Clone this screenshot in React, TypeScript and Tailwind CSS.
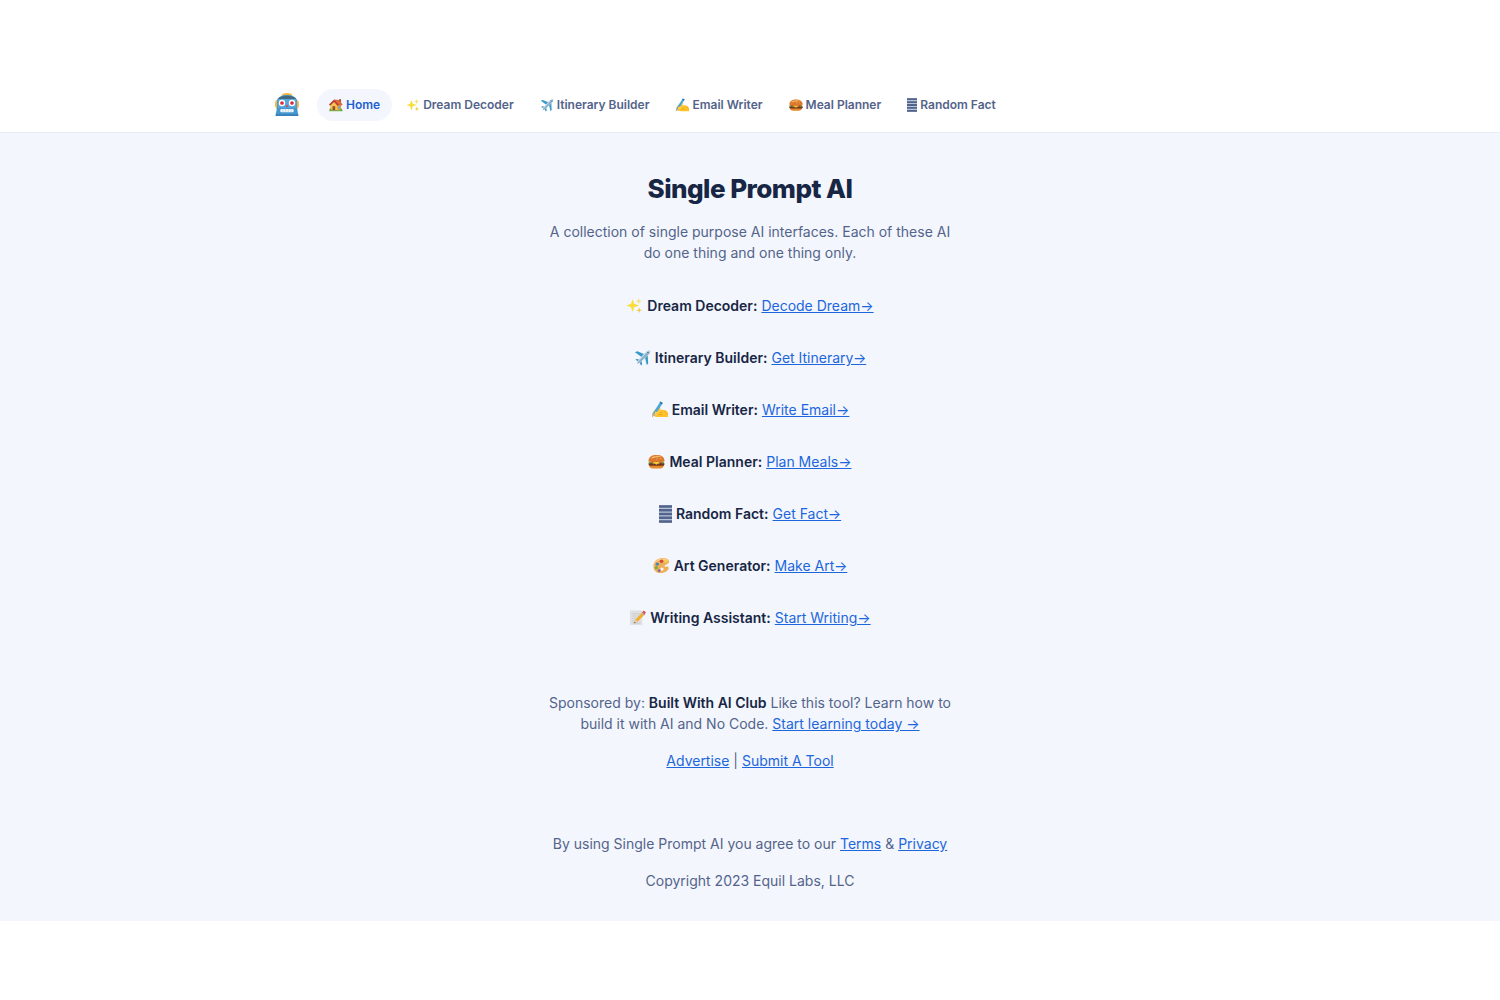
import React from "react";

type IconProps = { className: string };
type Icon = (props: IconProps) => React.ReactElement;

const Robot: Icon = ({ className }) => (
  <svg viewBox="0 0 36 36" className={className} aria-hidden="true">
    <ellipse cx="4" cy="17" rx="4" ry="7" fill="#f5b63f" />
    <ellipse cx="32" cy="17" rx="4" ry="7" fill="#f5b63f" />
    <ellipse cx="18" cy="4" rx="8" ry="4" fill="#f5b63f" />
    <path d="M3 11C5 5 11 3 18 3s13 2 15 8v13H3z" fill="#4596d0" />
    <path d="M4 9C8 5 12 4 18 4S28 5 32 9z" fill="#44687c" />
    <path d="M4 9h28v14H4z" fill="#55a7e0" />
    <path d="M3 22h30l2 11H1z" fill="#4596d0" />
    <path d="M1 32h34v2.500H1z" fill="#397fb7" />
    <circle cx="10.500" cy="15" r="4.800" fill="#fff" />
    <circle cx="25.500" cy="15" r="4.800" fill="#fff" />
    <circle cx="10.500" cy="15" r="2.800" fill="#d92d45" />
    <circle cx="25.500" cy="15" r="2.800" fill="#d92d45" />
    <path d="M18 17l2 4h-4z" fill="#d94355" />
    <rect x="8" y="24" width="20" height="5" rx="1.500" fill="#eff8fd" />
    <path d="M12 24v5M16 24v5M20 24v5M24 24v5" stroke="#a0bfd4" strokeWidth=".8" />
  </svg>
);

const House: Icon = ({ className }) => (
  <svg viewBox="0 0 36 36" className={className} aria-hidden="true">
    <path d="M26 3h5v9h-5z" fill="#a84c35" />
    <path d="M4 17L14 8l17 7v16H4z" fill="#e6a23f" />
    <path d="M4 17L13 8l8 9v14H4z" fill="#f6c652" />
    <path d="M13 4l13 1 9 12-3 2H21z" fill="#dc6a3f" />
    <path d="M13 4L0 17l3 3L13 10l9 10 3-2z" fill="#b63d31" />
    <path d="M9 21h7v11H9z" fill="#9b4e2c" />
    <path d="M23 22h6v5h-6z" fill="#6ba6c9" />
    <path d="M1 31h34v3H1z" fill="#78a940" />
    <circle cx="4" cy="30" r="3" fill="#78a940" />
    <circle cx="31" cy="30" r="3" fill="#78a940" />
  </svg>
);

const Sparkles: Icon = ({ className }) => (
  <svg viewBox="0 0 36 36" className={className} aria-hidden="true">
    <path d="M14 5l3.500 9.500L28 18l-10.500 3.500L14 32l-3.500-10.500L1 18l9.500-3.500z" fill="#f8df3e" />
    <path d="M27 2l1.700 5.300L34 9l-5.300 1.700L27 16l-1.700-5.300L20 9l5.300-1.700z" fill="#f8e27b" />
    <path d="M28 22l1.700 4.300L34 28l-4.300 1.700L28 34l-1.700-4.300L22 28l4.300-1.700z" fill="#efce46" />
  </svg>
);

const Plane: Icon = ({ className }) => (
  <svg viewBox="0 0 36 36" className={className} aria-hidden="true">
    <path d="M2 7l5-2 18 7-6 7zM23 17l6-6 1 20-3 3z" fill="#369bc7" />
    <path d="M3 23l3-2 10 3 1 9-2 2-4-8z" fill="#348bb9" />
    <path d="M34 3c-3-2-8 2-12 6L8 25l-2 7 7-3 15-14c4-4 8-9 6-12z" fill="#c6dce9" />
    <path d="M33 4c-3 2-8 5-12 10L8 28l-1 3 6-3 15-14c3-3 6-7 5-10z" fill="#8dafc9" />
    <path d="M28 6l3 3" stroke="#36556e" strokeWidth="2" />
  </svg>
);

const WritingHand: Icon = ({ className }) => (
  <svg viewBox="0 0 36 36" className={className} aria-hidden="true">
    <path d="M7 20c4-5 9-8 12-7 2 1 1 4-1 5l10 1c5 1 8 5 8 9v6H15C8 34 2 31 3 26z" fill="#ffc329" />
    <path d="M15 24l9 1M14 28l10 1M28 22c4 2 6 5 7 7" stroke="#e79b1b" strokeWidth="1.500" fill="none" />
    <path d="M20 1l5 3L9 29l-7 5 2-8z" fill="#4fa5d8" />
    <path d="M20 1l5 3-2 3-5-3z" fill="#357aaa" />
    <path d="M4 26l5 3-7 5z" fill="#d0b49a" />
    <path d="M9 22c3 2 5 1 8-2 4-1 4 3 1 5l-6 5c-4 1-6-4-3-8z" fill="#ffcc3e" />
  </svg>
);

const Burger: Icon = ({ className }) => (
  <svg viewBox="0 0 36 36" className={className} aria-hidden="true">
    <path d="M2 24h32c0 6-4 9-8 9H10c-5 0-8-3-8-9z" fill="#e68a2e" />
    <rect x="1" y="20" width="34" height="7" rx="3.500" fill="#70351f" />
    <path d="M1 18h34l-3 5-5-2-5 3-5-3-5 3-5-3-5 2z" fill="#7ea83b" />
    <path d="M4 18h28l-4 3H8z" fill="#d44c30" />
    <path d="M10 19h15l-7 6z" fill="#ffc735" />
    <path d="M1 17C1 8 8 4 18 4s17 4 17 13c-4 3-30 3-34 0z" fill="#db792c" />
    <path d="M5 12C8 5 24 4 29 8 22 8 13 10 5 12z" fill="#f5ae5c" />
    <path d="M11 10l2-1M18 8h2M25 11l2 1M18 13l2-1" stroke="#ffe0a1" strokeWidth="1.500" />
  </svg>
);

const Bars: Icon = ({ className }) => (
  <svg viewBox="0 0 13 18" preserveAspectRatio="none" className={className} aria-hidden="true">
    <path d="M0 0h13v18H0z" fill="#b8c3da" />
    <path d="M0 1.500h13M0 5.250h13M0 9h13M0 12.750h13M0 16.500h13" stroke="#52648b" strokeWidth="2.300" />
  </svg>
);

const Palette: Icon = ({ className }) => (
  <svg viewBox="0 0 36 36" className={className} aria-hidden="true">
    <path d="M20 2C8 2 1 10 1 20c0 9 7 14 15 14 11 0 18-7 17-12-1-4-6 0-8-2-3-3 8-4 9-10 1-5-6-8-14-8zm-1 20a3.500 3.500 0 110 7 3.500 3.500 0 010-7z" fill="#edaf58" />
    <path d="M20 3C10 3 4 9 2 17 7 8 15 5 23 7c5 1 8 2 11 0-2-3-8-4-14-4z" fill="#ffd18a" />
    <circle cx="18" cy="9" r="3.600" fill="#d4443e" />
    <circle cx="27" cy="9" r="3" fill="#f0d447" />
    <circle cx="9" cy="15" r="3.600" fill="#3d87bd" />
    <circle cx="7" cy="23" r="3.200" fill="#71a94c" />
    <circle cx="13" cy="29" r="3" fill="#8662a7" />
  </svg>
);

const Memo: Icon = ({ className }) => (
  <svg viewBox="0 0 36 36" className={className} aria-hidden="true">
    <path d="M2 3h26v31H2z" fill="#dfe1e2" />
    <path d="M7 10h17M7 15h13M7 20h9M7 25h7M7 30h17" stroke="#b9bfc5" strokeWidth="1.200" />
    <path d="M29 6l5 5-16 16-7 3 3-8z" fill="#f5ac2c" />
    <path d="M27 8l3-4c2-2 7 3 5 5l-3 4z" fill="#dc5260" />
    <path d="M26 9l2-2 5 5-2 2z" fill="#b6bbc1" />
    <path d="M14 22l4 5-7 3z" fill="#efd0a0" />
    <path d="M12 27l2 2-3 1z" fill="#333b48" />
  </svg>
);

const navItems: { icon: Icon; label: string; active?: boolean; narrow?: boolean }[] = [
  { icon: House, label: "Home", active: true },
  { icon: Sparkles, label: "Dream Decoder" },
  { icon: Plane, label: "Itinerary Builder" },
  { icon: WritingHand, label: "Email Writer" },
  { icon: Burger, label: "Meal Planner" },
  { icon: Bars, label: "Random Fact", narrow: true },
];

const tools: { icon: Icon; name: string; action: string; narrow?: boolean }[] = [
  { icon: Sparkles, name: "Dream Decoder:", action: "Decode Dream→" },
  { icon: Plane, name: "Itinerary Builder:", action: "Get Itinerary→" },
  { icon: WritingHand, name: "Email Writer:", action: "Write Email→" },
  { icon: Burger, name: "Meal Planner:", action: "Plan Meals→" },
  { icon: Bars, name: "Random Fact:", action: "Get Fact→", narrow: true },
  { icon: Palette, name: "Art Generator:", action: "Make Art→" },
  { icon: Memo, name: "Writing Assistant:", action: "Start Writing→" },
];

function TextLink({ children }: { children: React.ReactNode }) {
  return (
    <a href="#" className="text-[#1d66dc] underline underline-offset-1">
      {children}
    </a>
  );
}

export default function App() {
  return (
    <div className="min-h-screen bg-white pt-[78px] font-['Inter',sans-serif]">
      <header className="border-b border-[#e6edf6] bg-white">
        <div className="mx-auto flex max-w-[954px] items-center gap-4 py-[11px]">
          <a href="#" aria-label="Single Prompt AI" className="flex w-7 justify-center">
            <Robot className="size-6" />
          </a>
          <nav className="flex items-center gap-0.5">
            {navItems.map(({ icon: ItemIcon, label, active, narrow }) => (
              <a
                key={label}
                href="#"
                className={`flex h-8 items-center gap-[3px] rounded-full px-3 text-[12px] font-semibold whitespace-nowrap ${
                  active ? "bg-[#f3f6fd] text-[#1d5fd0]" : "text-[#53648a]"
                }`}
              >
                <ItemIcon className={narrow ? "h-[14px] w-[10px]" : "size-[14px]"} />
                {label}
              </a>
            ))}
          </nav>
        </div>
      </header>

      <main className="bg-[#f3f6fd] px-4 pt-10 pb-[30px] text-[14px] leading-[21px] text-[#53648a]">
        <div className="mx-auto max-w-[420px] text-center">
          <h1 className="text-[26px] leading-8 font-extrabold tracking-[-0.02em] text-[#172644]">Single Prompt AI</h1>
          <p className="mt-4">
            A collection of single purpose AI interfaces. Each of these AI do one thing and one thing only.
          </p>
          <ul className="mt-8 flex flex-col gap-[31px]">
            {tools.map(({ icon: ToolIcon, name, action, narrow }) => (
              <li key={name} className="flex items-center justify-center gap-1">
                <ToolIcon className={narrow ? "h-[18px] w-[13px]" : "size-[17px]"} />
                <strong className="font-semibold text-[#172644]">{name}</strong>
                <TextLink>{action}</TextLink>
              </li>
            ))}
          </ul>
          <p className="mt-16">
            Sponsored by: <strong className="font-semibold text-[#172644]">Built With AI Club</strong> Like this tool?
            Learn how to build it with AI and No Code. <TextLink>Start learning today →</TextLink>
          </p>
          <p className="mt-4">
            <TextLink>Advertise</TextLink> | <TextLink>Submit A Tool</TextLink>
          </p>
          <footer className="mt-[62px]">
            <p>
              By using Single Prompt AI you agree to our <TextLink>Terms</TextLink> & <TextLink>Privacy</TextLink>
            </p>
            <p className="mt-4">Copyright 2023 Equil Labs, LLC</p>
          </footer>
        </div>
      </main>
    </div>
  );
}
